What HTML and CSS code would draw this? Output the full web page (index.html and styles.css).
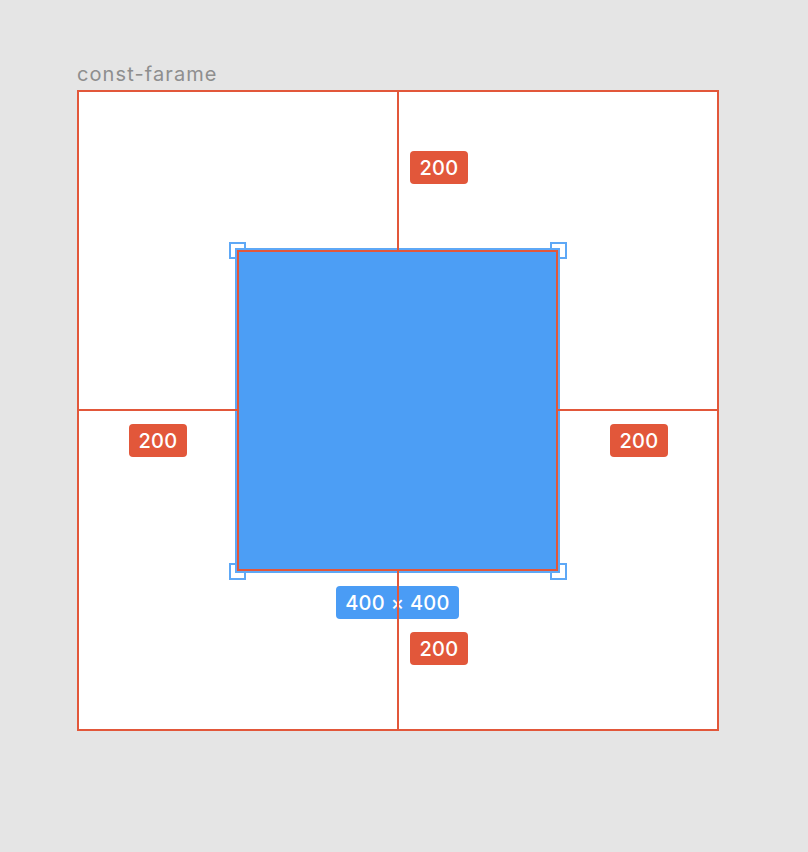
FILE: index.html
```html
<!DOCTYPE html>
<html lang="en">

<head>
    <meta charset="UTF-8">
    <meta name="viewport" content="width=device-width, initial-scale=1.0">
    <title>const-farame</title>
    <link rel="stylesheet" href="styles.css">
</head>

<body>
    <div class="canvas">
        <div class="frame-name">const-farame</div>

        <div class="frame">
            <!-- selected child -->
            <div class="handle handle-tl"></div>
            <div class="handle handle-tr"></div>
            <div class="handle handle-bl"></div>
            <div class="handle handle-br"></div>
            <div class="child"></div>

            <div class="size-label">400 × 400</div>

            <!-- constraint guides -->
            <div class="guide guide-top"></div>
            <div class="guide guide-bottom"></div>
            <div class="guide guide-left"></div>
            <div class="guide guide-right"></div>

            <div class="badge badge-top">200</div>
            <div class="badge badge-left">200</div>
            <div class="badge badge-right">200</div>
            <div class="badge badge-bottom">200</div>
        </div>
    </div>
</body>

</html>
```

FILE: styles.css
```css
body {
    margin: 0;
    padding: 0;
    background-color: #e5e5e5;
    font-family: Inter, "Noto Sans", sans-serif;
    height: 852px;
    overflow: hidden;
}

.canvas {
    padding: 62px 0 0 77px;
}

.frame-name {
    font-size: 20px;
    line-height: 24px;
    color: #8e8e8e;
    margin-bottom: 4px;
    letter-spacing: 1.1px;
}

.frame {
    position: relative;
    width: 642px;
    height: 641px;
    background-color: #fff;
    box-shadow: inset 0 0 0 2px #e2573a;
}

.child {
    position: absolute;
    left: 160px;
    top: 160px;
    width: 321px;
    height: 321px;
    box-sizing: border-box;
    background-color: #4c9ef5;
    border: 2px solid #e2573a;
    outline: 2px solid #5ea8f6;
}

.handle {
    position: absolute;
    width: 17px;
    height: 17px;
    box-sizing: border-box;
    background-color: #fff;
    border: 2px solid #5ea8f6;
}

.handle-tl {
    left: 152px;
    top: 152px;
}

.handle-tr {
    left: 473px;
    top: 152px;
}

.handle-bl {
    left: 152px;
    top: 473px;
}

.handle-br {
    left: 473px;
    top: 473px;
}

.guide {
    position: absolute;
    background-color: #e2573a;
}

.guide-top {
    left: 320px;
    top: 0;
    width: 2px;
    height: 160px;
}

.guide-bottom {
    left: 320px;
    top: 481px;
    width: 2px;
    height: 160px;
}

.guide-left {
    left: 0;
    top: 319px;
    width: 160px;
    height: 2px;
}

.guide-right {
    left: 481px;
    top: 319px;
    width: 161px;
    height: 2px;
}

.badge,
.size-label {
    position: absolute;
    height: 33px;
    display: flex;
    align-items: center;
    justify-content: center;
    border-radius: 4px;
    color: #fff;
    font-size: 20px;
    font-weight: 500;
    letter-spacing: 0.3px;
}

.badge {
    width: 58px;
    background-color: #e2573a;
}

.badge-top {
    left: 333px;
    top: 61px;
}

.badge-left {
    left: 52px;
    top: 334px;
}

.badge-right {
    left: 533px;
    top: 334px;
}

.badge-bottom {
    left: 333px;
    top: 542px;
}

.size-label {
    left: 259px;
    top: 496px;
    width: 123px;
    background-color: #4a9cf5;
}
```
